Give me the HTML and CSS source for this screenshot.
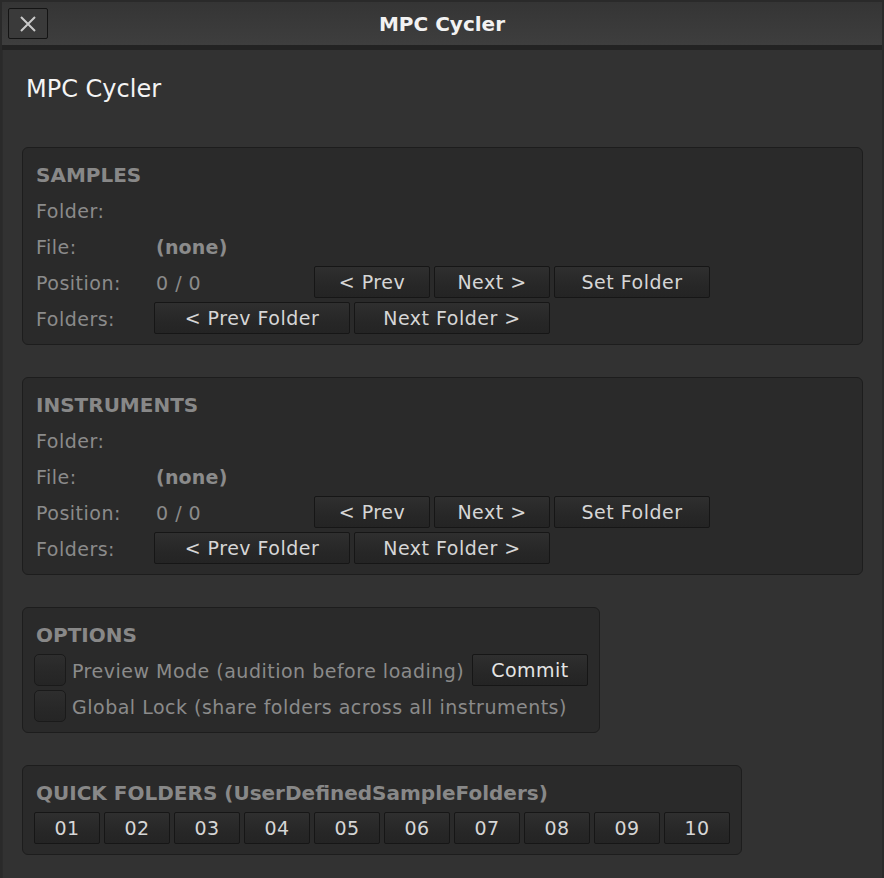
FILE: index.html
```html
<!DOCTYPE html>
<html lang="en">
<head>
  <meta charset="UTF-8" />
  <meta name="viewport" content="width=device-width, initial-scale=1.0"/>
  <title>MPC Cycler</title>
  <link rel="stylesheet" href="styles.css">
</head>
<body>
  <div class="window">
    <header class="titlebar">
      <button class="close-btn" aria-label="Close">
        <svg width="16" height="16" viewBox="0 0 16 16">
          <path d="M1 1 L15 15 M15 1 L1 15" stroke="#c9c9c9" stroke-width="2" fill="none"/>
        </svg>
      </button>
      <span class="title">MPC Cycler</span>
    </header>

    <main class="content">
      <h1 class="app-name">MPC Cycler</h1>

      <section class="panel panel-wide">
        <div class="panel-title">SAMPLES</div>
        <div class="row"><span class="label">Folder:</span><span class="value"></span></div>
        <div class="row"><span class="label">File:</span><span class="value strong">(none)</span></div>
        <div class="row">
          <span class="label">Position:</span>
          <span class="value pos">0 / 0</span>
          <button class="btn btn-nav">&lt; Prev</button>
          <button class="btn btn-nav">Next &gt;</button>
          <button class="btn btn-set">Set Folder</button>
        </div>
        <div class="row">
          <span class="label">Folders:</span>
          <button class="btn btn-folder">&lt; Prev Folder</button>
          <button class="btn btn-folder">Next Folder &gt;</button>
        </div>
      </section>

      <section class="panel panel-wide">
        <div class="panel-title">INSTRUMENTS</div>
        <div class="row"><span class="label">Folder:</span><span class="value"></span></div>
        <div class="row"><span class="label">File:</span><span class="value strong">(none)</span></div>
        <div class="row">
          <span class="label">Position:</span>
          <span class="value pos">0 / 0</span>
          <button class="btn btn-nav">&lt; Prev</button>
          <button class="btn btn-nav">Next &gt;</button>
          <button class="btn btn-set">Set Folder</button>
        </div>
        <div class="row">
          <span class="label">Folders:</span>
          <button class="btn btn-folder">&lt; Prev Folder</button>
          <button class="btn btn-folder">Next Folder &gt;</button>
        </div>
      </section>

      <section class="panel panel-options">
        <div class="panel-title">OPTIONS</div>
        <div class="row">
          <span class="checkbox"></span>
          <span class="check-label">Preview Mode (audition before loading)</span>
          <button class="btn btn-commit">Commit</button>
        </div>
        <div class="row">
          <span class="checkbox"></span>
          <span class="check-label">Global Lock (share folders across all instruments)</span>
        </div>
      </section>

      <section class="panel panel-quick">
        <div class="panel-title">QUICK FOLDERS (UserDefinedSampleFolders)</div>
        <div class="quick-grid">
          <button class="btn">01</button>
          <button class="btn">02</button>
          <button class="btn">03</button>
          <button class="btn">04</button>
          <button class="btn">05</button>
          <button class="btn">06</button>
          <button class="btn">07</button>
          <button class="btn">08</button>
          <button class="btn">09</button>
          <button class="btn">10</button>
        </div>
      </section>
    </main>
  </div>
</body>
</html>
```

FILE: styles.css
```css
html, body {
  margin: 0;
  height: 100%;
  overflow: hidden;
}
body {
  font-family: "DejaVu Sans", "Liberation Sans", sans-serif;
  background: #282828;
  color: #8b8b8b;
}
.window {
  height: 100vh;
  box-sizing: border-box;
  border: 2px solid #2a2a2a;
  display: flex;
  flex-direction: column;
}
.titlebar {
  height: 43px;
  flex: none;
  display: grid;
  grid-template-columns: 1fr auto 1fr;
  align-items: center;
  padding-left: 6px;
  background: linear-gradient(#353535, #3e3e3e);
  border-bottom: 5px solid #232323;
}
.close-btn {
  justify-self: start;
  width: 40px;
  height: 31px;
  padding: 0;
  display: flex;
  align-items: center;
  justify-content: center;
  background: #3a3a3a;
  border: 1px solid #141414;
  border-radius: 2px;
}
.title {
  font-size: 20px;
  font-weight: bold;
  color: #f2f2f2;
  margin-left: -6px;
}
.content {
  flex: 1;
  background: #323232;
  padding: 25px 20px 0;
  border-left: 1px solid #2c2c2c;
}
.app-name {
  margin: 0 0 44px 3px;
  font-size: 24px;
  font-weight: normal;
  line-height: 28px;
  color: #f4f4f4;
}
.panel {
  box-sizing: border-box;
  background: #2a2a2a;
  border: 1px solid #1d1d1d;
  border-radius: 6px;
  padding: 10px 11px;
  margin-bottom: 32px;
  display: flex;
  flex-direction: column;
  gap: 4px;
}
.panel-wide {
  height: 198px;
  margin-left: -1px;
  margin-right: -1px;
}
.panel-options {
  width: 578px;
  margin-left: -1px;
}
.panel-quick {
  width: 720px;
  margin-left: -1px;
}
.panel-title {
  height: 32px;
  line-height: 34px;
  padding-left: 2px;
  font-size: 20px;
  font-weight: bold;
  color: #888888;
}
.row {
  height: 32px;
  display: flex;
  align-items: center;
  gap: 4px;
  font-size: 19px;
  letter-spacing: 0.5px;
}
.label {
  box-sizing: border-box;
  width: 116px;
  padding: 2px 0 0 2px;
  flex: none;
}
.value {
  padding: 2px 0 0 2px;
}
.value.strong {
  font-weight: bold;
  letter-spacing: 0.2px;
}
.value.pos {
  box-sizing: border-box;
  width: 156px;
}
.btn {
  box-sizing: border-box;
  height: 32px;
  padding: 0;
  font-family: inherit;
  font-size: 19px;
  letter-spacing: 0.5px;
  color: #d6d6d6;
  background: linear-gradient(#2f2f2f, #272727 60%, #242424);
  border: 1px solid #161616;
  border-radius: 2px;
}
.btn-nav {
  width: 116px;
}
.btn-set {
  width: 156px;
}
.btn-folder {
  width: 196px;
}
.btn-commit {
  width: 116px;
  margin-left: auto;
  color: #e4e4e4;
}
.checkbox {
  box-sizing: border-box;
  width: 32px;
  height: 32px;
  flex: none;
  border: 1px solid #1a1a1a;
  border-radius: 5px;
  background: linear-gradient(#2e2e2e, #282828 55%, #252525);
}
.check-label {
  padding: 2px 0 0 2px;
  white-space: nowrap;
}
.quick-grid {
  display: grid;
  grid-template-columns: repeat(10, 66px);
  gap: 4px;
}
```
